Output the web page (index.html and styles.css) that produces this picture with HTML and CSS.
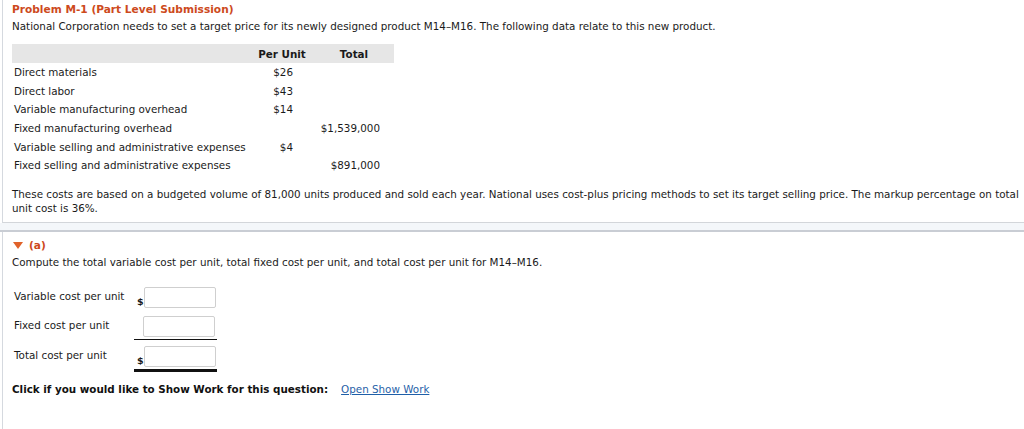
FILE: index.html
```html
<!DOCTYPE html>
<html>
<head>
<meta charset="utf-8">
<link rel="stylesheet" href="styles.css">
</head>
<body>
<div class="page">
  <section class="box box-intro">
    <h1 class="title">Problem M-1 (Part Level Submission)</h1>
    <p class="lead">National Corporation needs to set a target price for its newly designed product M14–M16. The following data relate to this new product.</p>
    <table class="data">
      <colgroup>
        <col class="c-label"><col class="c-unit"><col class="c-total">
      </colgroup>
      <thead>
        <tr><th></th><th>Per Unit</th><th>Total</th></tr>
      </thead>
      <tbody>
        <tr><td class="lbl">Direct materials</td><td class="num unit">$26</td><td class="num tot"></td></tr>
        <tr><td class="lbl">Direct labor</td><td class="num unit">$43</td><td class="num tot"></td></tr>
        <tr><td class="lbl">Variable manufacturing overhead</td><td class="num unit">$14</td><td class="num tot"></td></tr>
        <tr><td class="lbl">Fixed manufacturing overhead</td><td class="num unit"></td><td class="num tot">$1,539,000</td></tr>
        <tr><td class="lbl">Variable selling and administrative expenses</td><td class="num unit">$4</td><td class="num tot"></td></tr>
        <tr><td class="lbl">Fixed selling and administrative expenses</td><td class="num unit"></td><td class="num tot">$891,000</td></tr>
      </tbody>
    </table>
    <p class="note">These costs are based on a budgeted volume of 81,000 units produced and sold each year. National uses cost-plus pricing methods to set its target selling price. The markup percentage on total unit cost is 36%.</p>
  </section>
  <div class="divider"></div>
  <section class="box box-part">
    <h2 class="part-head"><svg class="tri" width="10" height="7" viewBox="0 0 10 7"><polygon points="0,0 10,0 5,7" fill="#e0622a"/></svg><span>(a)</span></h2>
    <p class="lead">Compute the total variable cost per unit, total fixed cost per unit, and total cost per unit for M14–M16.</p>
    <div class="form">
      <div class="frow">
        <div class="flabel">Variable cost per unit</div>
        <div class="field"><span class="cur">$</span><input class="inp" type="text"></div>
      </div>
      <div class="frow">
        <div class="flabel">Fixed cost per unit</div>
        <div class="field single"><span class="cur"></span><input class="inp" type="text"></div>
      </div>
      <div class="frow">
        <div class="flabel">Total cost per unit</div>
        <div class="field double"><span class="cur">$</span><input class="inp" type="text"></div>
      </div>
    </div>
    <p class="showwork"><b>Click if you would like to Show Work for this question:</b><a class="link" href="#">Open Show Work</a></p>
  </section>
</div>
</body>
</html>
```
FILE: styles.css
```css
html, body {
  margin: 0;
  padding: 0;
  background: #fff;
}
body {
  font-family: "DejaVu Sans", Verdana, sans-serif;
  font-size: 10.35px;
  color: #1a1a1a;
}
.page {
  padding-left: 2px;
}
.box {
  border-left: 1px solid #d5d9df;
  padding-left: 9px;
}
.box-intro {
  padding-top: 1px;
  padding-bottom: 7px;
  border-bottom: 1px solid #d3d6da;
}
.title {
  margin: 0;
  font-size: 10.6px;
  line-height: 17px;
  font-weight: bold;
  color: #cd4a1d;
}
.lead {
  margin: 0;
  line-height: 17px;
}
.data {
  margin-top: 9px;
  border-collapse: collapse;
  width: 382px;
  table-layout: fixed;
}
.c-label { width: 238px; }
.c-unit { width: 64px; }
.c-total { width: 80px; }
.data th {
  background: #e6e6e6;
  height: 19px;
  padding: 0;
  font-weight: bold;
  text-align: center;
}
.data td {
  padding: 0;
  height: 18.6px;
  line-height: 14px;
  white-space: nowrap;
}
.data td.lbl {
  padding-left: 2px;
}
.data td.num {
  text-align: right;
}
.data td.unit { padding-right: 21px; }
.data td.tot { padding-right: 14px; }
.note {
  margin: 12px 0 0 0;
  line-height: 14px;
}
.divider {
  height: 7px;
  background: #f4f7fa;
  border-bottom: 2px solid #c9cdd4;
  margin-left: -2px;
}
.box-part {
  padding-top: 5px;
  padding-bottom: 40px;
}
.part-head {
  margin: 0;
  font-size: 10.6px;
  line-height: 17px;
  font-weight: bold;
  color: #cd4a1d;
  display: flex;
  align-items: center;
}
.tri {
  margin-left: 1px;
  margin-right: 6px;
}
.form {
  margin-top: 15px;
  display: flex;
  flex-direction: column;
  gap: 5px;
}
.frow {
  display: flex;
  align-items: flex-start;
}
.flabel {
  width: 120px;
  padding-left: 2px;
  padding-top: 3px;
  line-height: 14px;
}
.field {
  width: 78px;
  display: flex;
  align-items: flex-end;
  padding: 1px 2px 2px 3px;
}
.field.single {
  border-bottom: 1px solid #111;
}
.field.double {
  border-bottom: 3px solid #111;
}
.cur {
  width: 7px;
  font-size: 9.5px;
  font-weight: bold;
  line-height: 12px;
}
.inp {
  box-sizing: border-box;
  width: 72px;
  height: 21px;
  margin: 0;
  border: 1px solid #cfcfcf;
  border-radius: 2px;
  background: #fff;
  padding: 0 3px;
}
.showwork {
  margin: 10px 0 0 0;
  line-height: 14px;
}
.showwork b {
  font-weight: bold;
  color: #111;
}
.link {
  margin-left: 13px;
  color: #1f5fa8;
  text-decoration: underline;
}
```
